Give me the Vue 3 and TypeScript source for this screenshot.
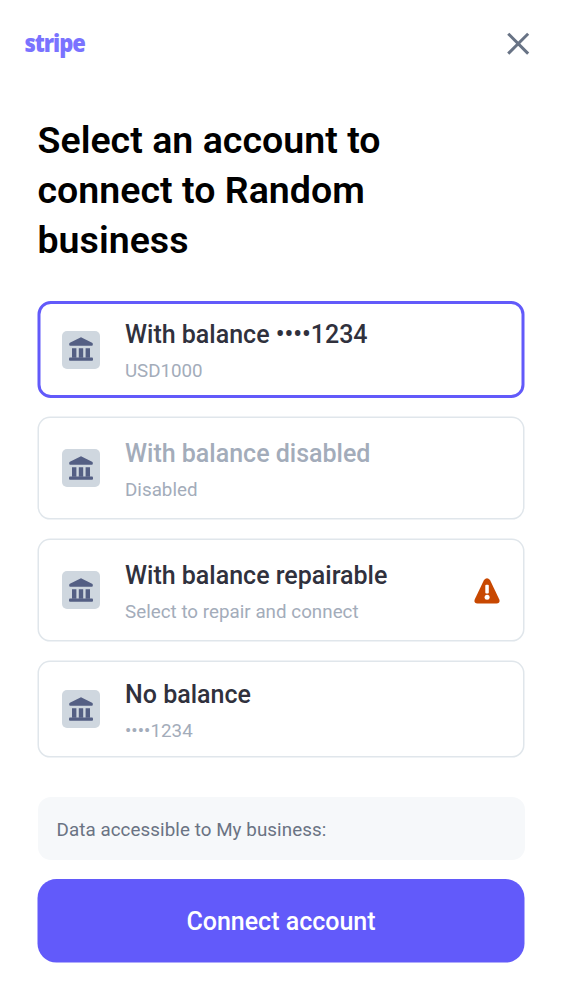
<script setup lang="ts">
interface Account {
  name: string
  detail: string
  state?: 'selected' | 'disabled' | 'repairable'
  tall?: boolean
}

const accounts: Account[] = [
  { name: 'With balance ••••1234', detail: 'USD1000', state: 'selected' },
  { name: 'With balance disabled', detail: 'Disabled', state: 'disabled', tall: true },
  { name: 'With balance repairable', detail: 'Select to repair and connect', state: 'repairable', tall: true },
  { name: 'No balance', detail: '••••1234' },
]

const outlineWidth = (account: Account): number => (account.state === 'selected' ? 3 : 1.5)
const outlineTop = (account: Account): number => (account.state === 'selected' ? 1.5 : 0.35)
const outlineHeight = (account: Account): number => (account.tall ? 103 : 97)
</script>

<template>
  <main class="screen">
    <header class="topbar">
      <svg class="logo" width="70" height="44" viewBox="0 0 70 44" role="img" aria-label="stripe">
        <text x="-0.6" y="30" textLength="60.5" lengthAdjust="spacingAndGlyphs">stripe</text>
      </svg>
      <button class="close" aria-label="Close">
        <svg width="24" height="24" viewBox="0 0 24 24">
          <path d="M3.3 2.8 21.1 20.6M21.1 2.8 3.3 20.6" fill="none" stroke="#687385" stroke-width="3" stroke-linecap="square" />
        </svg>
      </button>
    </header>

    <h1>Select an account to<br />connect to Random<br />business</h1>

    <div class="accounts">
      <button
        v-for="account in accounts"
        :key="account.name"
        class="account"
        :class="[account.state, { tall: account.tall }]"
        :disabled="account.state === 'disabled'"
      >
        <svg class="outline" width="488" :height="outlineHeight(account)">
          <rect
            :x="0.5 + outlineWidth(account) / 2"
            :y="outlineTop(account)"
            :width="487 - outlineWidth(account)"
            :height="outlineHeight(account) - outlineWidth(account)"
            :stroke-width="outlineWidth(account)"
            rx="11.8"
          />
        </svg>
        <span class="bank">
          <svg width="24" height="25" viewBox="0 0 24 25" fill="#545f84">
            <path d="M12 .3 23.1 5.7Q23.8 6.1 23.8 7V7.8Q23.8 8.8 22.8 8.8H1.2Q.2 8.8.2 7.8V7Q.2 6.1.9 5.7Z" />
            <path d="M3 11.2h4.4v9.6H3zM9.8 11.2h4.4v9.6H9.8zM16.6 11.2H21v9.6h-4.4z" />
            <rect x="0" y="20.6" width="24" height="3.2" rx="1" />
          </svg>
        </span>
        <span class="info">
          <span class="name">{{ account.name }}</span>
          <span class="detail">{{ account.detail }}</span>
        </span>
        <svg v-if="account.state === 'repairable'" class="warning" width="26" height="26" viewBox="0 0 26 26">
          <path d="M10 2.1Q13-1.8 16 2.1L25.3 21.5Q26.5 25.3 22.6 25.6H3.4Q-.5 25.3.7 21.5Z" fill="#c84801" />
          <rect x="11.3" y="6.8" width="3.5" height="8.6" rx="1" fill="#fff" />
          <circle cx="13.1" cy="19.2" r="2.5" fill="#fff" />
        </svg>
      </button>
    </div>

    <div class="notice">Data accessible to My business:</div>
    <button class="connect">
      <svg class="fill" width="488" height="84"><rect x=".5" y="0" width="487" height="83.6" rx="19" /></svg>
      <span class="label">Connect account</span>
    </button>
  </main>
</template>

<style>
body {
  margin: 0;
  background: #fff;
}
</style>

<style scoped>
.screen {
  box-sizing: border-box;
  width: 562px;
  height: 1000px;
  padding: 0 37px;
  background: #fff;
  font-family: Roboto, sans-serif;
}
button {
  font-family: inherit;
  box-sizing: border-box;
  margin: 0;
  padding: 0;
}
.topbar {
  display: flex;
  align-items: center;
  justify-content: space-between;
  height: 87px;
  margin: 0 -5px 0 -12.5px;
}
.logo {
  overflow: visible;
}
.logo text {
  font: 800 25.5px "Open Sans", sans-serif;
  letter-spacing: -1.2px;
  fill: #7a73ff;
}
.close {
  display: flex;
  border: 0;
  background: none;
}
h1 {
  margin: 28px 0 0 0.5px;
  font-size: 37.5px;
  line-height: 50px;
  font-weight: 600;
  letter-spacing: 0.03px;
  color: #000;
  white-space: nowrap;
}
.accounts {
  display: flex;
  flex-direction: column;
  gap: 19px;
  margin-top: 36px;
}
.account {
  position: relative;
  display: flex;
  align-items: center;
  width: 488px;
  height: 97px;
  padding: 0 25px;
  border: 0;
  background: none;
  text-align: left;
}
.account.tall {
  height: 103px;
}
.outline {
  position: absolute;
  inset: 0;
  overflow: visible;
  fill: none;
  stroke: #e0e6eb;
}
.selected .outline {
  stroke: #625afa;
}
.bank {
  display: flex;
  align-items: center;
  justify-content: center;
  width: 38px;
  height: 38px;
  margin-top: -1px;
  border-radius: 5px;
  background: #cfd7df;
}
.selected .bank {
  margin-top: 0;
}
.info {
  display: flex;
  flex: 1;
  flex-direction: column;
  margin: 6px 0 0 25px;
  white-space: nowrap;
}
.name {
  font-size: 25px;
  line-height: 37px;
  font-weight: 500;
  color: #30313d;
}
.detail {
  font-size: 18.75px;
  line-height: 37px;
  letter-spacing: 0.03px;
  color: #a3acba;
}
.selected .detail {
  letter-spacing: -0.05px;
}
.disabled .name {
  color: #a3acba;
}
.notice {
  box-sizing: border-box;
  width: 487px;
  height: 63px;
  margin: 39px 0 0 0.5px;
  padding: 0 19px;
  border-radius: 13px;
  background: #f6f8fa;
  color: #6a7383;
  font-size: 18.75px;
  line-height: 66px;
  letter-spacing: 0.08px;
}
.connect {
  position: relative;
  display: block;
  width: 488px;
  height: 84px;
  margin-top: 19px;
  border: 0;
  background: none;
  color: #fff;
  font-size: 25px;
  font-weight: 500;
}
.fill {
  position: absolute;
  inset: 0;
  fill: #625afa;
}
.label {
  position: relative;
}
</style>
